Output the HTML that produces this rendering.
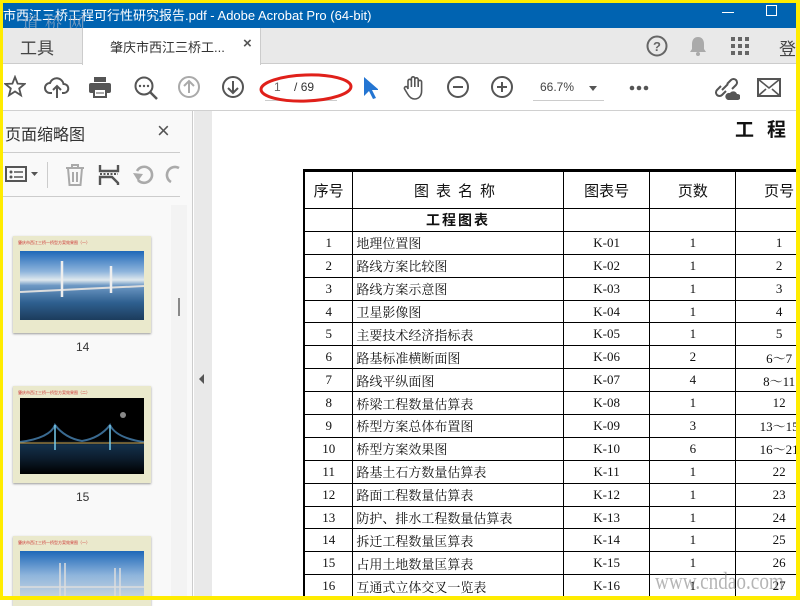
<!DOCTYPE html>
<html><head><meta charset="utf-8"><style>
*{margin:0;padding:0;box-sizing:border-box}
body{width:800px;height:600px;overflow:hidden;background:#fff;position:relative;font-family:"Liberation Sans","Noto Sans CJK SC",sans-serif}
.a{position:absolute}
.frame{position:absolute;inset:0;border:solid #ffec00;border-width:3px 4px 4px 3px;pointer-events:none;z-index:50}
table{border-collapse:collapse;font-family:"Liberation Serif","Noto Serif CJK SC",serif;font-size:13px;color:#111}
td{border:1px solid #000;height:22.9px;text-align:center;padding:0}
td.n{text-align:left;padding-left:3px}
tr.h td{height:38px;font-family:"Noto Sans CJK SC",sans-serif;font-size:15px}
.ic{position:absolute;top:75px}
</style></head><body>
<div class="frame"></div>
<!-- title bar -->
<div class="a" style="left:0;top:0;width:800px;height:28px;background:#0063b1"></div>
<div class="a" style="left:3px;top:5px;color:#fff;font-size:13px;white-space:nowrap">市西江三桥工程可行性研究报告.pdf - Adobe Acrobat Pro (64-bit)</div>
<div class="a" style="left:22px;top:9px;color:rgba(150,170,195,.8);font-size:17px;letter-spacing:6px;font-family:'Noto Serif CJK SC',serif">道桥网</div>
<div class="a" style="left:722px;top:12px;width:12px;height:1px;background:#fff"></div>
<div class="a" style="left:766px;top:5px;width:11px;height:11px;border:1px solid #fff"></div>
<!-- tab bar -->
<div class="a" style="left:0;top:28px;width:800px;height:36px;background:#e9e9e9;border-bottom:1px solid #ccc"></div>
<div class="a" style="left:20px;top:34px;font-size:17px;color:#444">工具</div>
<div class="a" style="left:82px;top:28px;width:179px;height:37px;background:#fff;border-left:1px solid #ccc;border-right:1px solid #ccc"></div>
<div class="a" style="left:110px;top:37px;font-size:13px;color:#333">肇庆市西江三桥工...</div>
<div class="a" style="left:243px;top:35px;font-size:15px;color:#555;font-weight:bold">×</div>
<svg class="a" style="left:646px;top:35px" width="22" height="22"><circle cx="11" cy="11" r="9.5" fill="none" stroke="#666" stroke-width="2"/><text x="11" y="16" font-size="13" font-weight="bold" text-anchor="middle" fill="#666" font-family="Liberation Sans">?</text></svg>
<svg class="a" style="left:688px;top:35px" width="20" height="22"><path d="M10 2c-4 0-6 3-6 7v5l-2 3h16l-2-3V9c0-4-2-7-6-7z" fill="#aaa"/><circle cx="10" cy="19" r="2" fill="#aaa"/></svg>
<svg class="a" style="left:731px;top:37px" width="18" height="18" fill="#666"><rect x="0" y="0" width="4" height="4"/><rect x="7" y="0" width="4" height="4"/><rect x="14" y="0" width="4" height="4"/><rect x="0" y="7" width="4" height="4"/><rect x="7" y="7" width="4" height="4"/><rect x="14" y="7" width="4" height="4"/><rect x="0" y="14" width="4" height="4"/><rect x="7" y="14" width="4" height="4"/><rect x="14" y="14" width="4" height="4"/></svg>
<div class="a" style="left:779px;top:35px;font-size:17px;color:#444">登</div>
<!-- toolbar -->
<div class="a" style="left:0;top:110px;width:800px;height:1px;background:#d0d0d0"></div>
<svg class="ic" style="left:4px" width="22" height="24"><path d="M11 2l2.6 6.6 7 .4-5.4 4.5 1.8 6.9L11 16.5 5 20.4l1.8-6.9L1.4 9l7-.4z" fill="none" stroke="#555" stroke-width="1.8"/></svg>
<svg class="ic" style="left:44px" width="26" height="24"><path d="M8 18H6a5 5 0 0 1 0-10 7 7 0 0 1 13.5 1A4.5 4.5 0 0 1 20 18h-2" fill="none" stroke="#555" stroke-width="2"/><path d="M13 23V11M9 15l4-4 4 4" fill="none" stroke="#555" stroke-width="2"/></svg>
<svg class="ic" style="left:88px" width="24" height="24"><rect x="6" y="2" width="12" height="5" fill="#555"/><rect x="1" y="8" width="22" height="10" rx="2" fill="#555"/><rect x="6" y="14" width="12" height="8" fill="#fff" stroke="#555" stroke-width="2"/><path d="M8 18h8" stroke="#555"/></svg>
<svg class="ic" style="left:133px" width="26" height="26"><circle cx="11" cy="11" r="8.5" fill="none" stroke="#555" stroke-width="2"/><path d="M17 17l7 7" stroke="#555" stroke-width="2.5"/><circle cx="7" cy="11" r="1.2" fill="#555"/><circle cx="11" cy="11" r="1.2" fill="#555"/><circle cx="15" cy="11" r="1.2" fill="#555"/></svg>
<svg class="ic" style="left:177px" width="24" height="24"><circle cx="12" cy="12" r="10" fill="none" stroke="#aaa" stroke-width="2"/><path d="M12 18V6M7 11l5-5 5 5" fill="none" stroke="#aaa" stroke-width="2"/></svg>
<svg class="ic" style="left:221px" width="24" height="24"><circle cx="12" cy="12" r="10" fill="none" stroke="#555" stroke-width="2"/><path d="M12 6v12M7 13l5 5 5-5" fill="none" stroke="#555" stroke-width="2"/></svg>
<div class="a" style="left:265px;top:100px;width:72px;height:1px;background:#ccc"></div>
<div class="a" style="left:274px;top:80px;font-size:12px;color:#333"><span style="color:#666">1</span>&nbsp;&nbsp;&nbsp;&nbsp;/ 69</div>
<svg class="a" style="left:258px;top:71px" width="96" height="34"><ellipse cx="48" cy="17" rx="45" ry="13" fill="none" stroke="#e0201a" stroke-width="3" transform="rotate(-2 48 17)"/></svg>
<svg class="ic" style="left:362px;top:76px" width="16" height="24"><path d="M2 1v19l5-5 4 8 3-1-4-8h7z" fill="#2475d2"/></svg>
<svg class="ic" style="left:402px" width="24" height="26"><path d="M6 14V6a1.7 1.7 0 0 1 3.4 0v6V3.5a1.7 1.7 0 0 1 3.4 0V12V4.5a1.7 1.7 0 0 1 3.4 0V12V7a1.7 1.7 0 0 1 3.4 0v9c0 5-3 8-7 8-3 0-5-1.5-7-5l-3-5a1.6 1.6 0 0 1 2.8-1.6z" fill="none" stroke="#555" stroke-width="1.6"/></svg>
<svg class="ic" style="left:446px" width="24" height="24"><circle cx="12" cy="12" r="10" fill="none" stroke="#555" stroke-width="2"/><path d="M7 12h10" stroke="#555" stroke-width="2"/></svg>
<svg class="ic" style="left:490px" width="24" height="24"><circle cx="12" cy="12" r="10" fill="none" stroke="#555" stroke-width="2"/><path d="M7 12h10M12 7v10" stroke="#555" stroke-width="2"/></svg>
<div class="a" style="left:540px;top:80px;font-size:12px;color:#444">66.7%</div>
<div class="a" style="left:589px;top:86px;border:4px solid transparent;border-top:5px solid #555"></div>
<div class="a" style="left:533px;top:100px;width:71px;height:1px;background:#ccc"></div>
<svg class="a" style="left:629px;top:85px" width="20" height="6" fill="#555"><circle cx="3" cy="3" r="2.3"/><circle cx="10" cy="3" r="2.3"/><circle cx="17" cy="3" r="2.3"/></svg>
<svg class="ic" style="left:712px;top:76px" width="28" height="26"><path d="M9 10l-4 4a3.5 3.5 0 0 0 5 5l4-4M15 8l4-4a3.5 3.5 0 0 1 5 5l-4 4M10 14l6-6" fill="none" stroke="#555" stroke-width="2"/><path d="M16 24h10a3 3 0 0 0-1-6 4 4 0 0 0-7-1 3.5 3.5 0 0 0-2 7z" fill="#555"/></svg>
<svg class="ic" style="left:757px;top:78px" width="24" height="20"><rect x="1" y="1" width="22" height="17" fill="none" stroke="#555" stroke-width="2"/><path d="M1 1l11 9 11-9M1 18l8-7M23 18l-8-7" fill="none" stroke="#555" stroke-width="1.6"/></svg>
<!-- left panel -->
<div class="a" style="left:0;top:111px;width:193px;height:489px;background:#f9f9f9;border-right:1px solid #ccc"></div>
<div class="a" style="left:5px;top:121px;font-size:16px;color:#333">页面缩略图</div>
<div class="a" style="left:157px;top:118px;font-size:22px;color:#555">×</div>
<div class="a" style="left:3px;top:152px;width:177px;height:1px;background:#ccc"></div>
<div class="a" style="left:3px;top:196px;width:177px;height:1px;background:#ccc"></div>
<svg class="a" style="left:4px;top:164px" width="36" height="20"><rect x="2" y="3" width="20" height="14" fill="none" stroke="#555" stroke-width="2"/><circle cx="7" cy="8" r="1.5" fill="#555"/><circle cx="7" cy="13" r="1.5" fill="#555"/><path d="M10 8h9M10 13h9" stroke="#555" stroke-width="1.6"/><path d="M27 8h7l-3.5 4z" fill="#555"/></svg>
<div class="a" style="left:47px;top:162px;width:1px;height:26px;background:#ccc"></div>
<svg class="a" style="left:64px;top:163px" width="22" height="24"><path d="M2 5h18M8 5V2h6v3M4 5l1.5 17h11L18 5M9 9v10M13 9v10" fill="none" stroke="#aaa" stroke-width="2"/></svg>
<svg class="a" style="left:98px;top:163px" width="22" height="24"><path d="M2 2v6h18V2M2 22v-8h12l6 6v2" fill="none" stroke="#555" stroke-width="2.4"/><path d="M2 11h18" stroke="#555" stroke-dasharray="2 1.5" stroke-width="2"/></svg>
<svg class="a" style="left:132px;top:164px" width="22" height="22"><path d="M6 16a8 8 0 1 0-1-9" fill="none" stroke="#aaa" stroke-width="2.6"/><path d="M1 9l5 8 5-7z" fill="#aaa"/></svg>
<svg class="a" style="left:165px;top:164px" width="15" height="22"><path d="M14 4a8 8 0 0 0-8 14" fill="none" stroke="#aaa" stroke-width="2.6"/></svg>
<div class="a" style="left:171px;top:205px;width:16px;height:395px;background:#f3f3f3"></div>
<div class="a" style="left:178px;top:298px;width:2px;height:18px;background:#888"></div>
<!-- thumbnails -->
<div class="a" style="left:13px;top:236px;width:138px;height:97px;background:#eae9cc;box-shadow:0 1px 2px #999"></div>
<div class="a" style="left:18px;top:240px;font-size:4px;color:#c33">肇庆市西江三桥一桥型方案效果图（一）</div>
<div class="a" style="left:20px;top:251px;width:124px;height:69px;background:linear-gradient(#1e68b8 0%,#8fb5dc 30%,#dfe8ee 42%,#6d98c4 50%,#2e5f8f 75%,#1c3c5c 100%)"></div>
<svg class="a" style="left:20px;top:251px" width="124" height="69"><path d="M0 41L124 35" stroke="#ddd" stroke-width="2"/><path d="M42 10v36M91 15v27" stroke="#eee" stroke-width="2.5"/></svg>
<div class="a" style="left:76px;top:340px;font-size:12px;color:#333">14</div>
<div class="a" style="left:13px;top:386px;width:138px;height:97px;background:#eae9cc;box-shadow:0 1px 2px #999"></div>
<div class="a" style="left:18px;top:390px;font-size:4px;color:#c33">肇庆市西江三桥一桥型方案效果图（二）</div>
<div class="a" style="left:20px;top:398px;width:124px;height:76px;background:linear-gradient(#000 0%,#000 55%,#13304a 62%,#0c1c2c 80%,#000 100%)"></div>
<svg class="a" style="left:20px;top:398px" width="124" height="76"><path d="M0 44Q30 40 35 27Q45 40 62 43Q80 40 90 27Q96 40 124 44" fill="none" stroke="#3a6a90" stroke-width="2"/><path d="M0 45h124" stroke="#d0a040"/><path d="M35 27v25M90 27v25" stroke="#7ce" stroke-width="1.5"/><circle cx="103" cy="17" r="3" fill="#888"/></svg>
<div class="a" style="left:76px;top:490px;font-size:12px;color:#333">15</div>
<div class="a" style="left:13px;top:536px;width:138px;height:70px;background:#eae9cc;box-shadow:0 1px 2px #999"></div>
<div class="a" style="left:18px;top:540px;font-size:4px;color:#c33">肇庆市西江三桥一桥型方案效果图（一）</div>
<div class="a" style="left:20px;top:551px;width:124px;height:49px;background:linear-gradient(#1e68b8,#8fb5dc 50%,#cfd8e0)"></div>
<svg class="a" style="left:20px;top:551px" width="124" height="49"><path d="M40 12v37M45 12v37M95 17v32M100 17v32M0 36h124" stroke="#ddd" stroke-width="1.5"/></svg>
<!-- divider -->
<div class="a" style="left:194px;top:111px;width:18px;height:489px;background:#e9e9e9"></div>
<div class="a" style="left:199px;top:374px;border:5px solid transparent;border-right:5px solid #555;border-left:0"></div>
<!-- page -->
<div class="a" style="left:735px;top:115px;font-size:19px;font-weight:bold;color:#111;letter-spacing:13px;font-family:'Noto Sans CJK SC',sans-serif;white-space:nowrap">工程</div>
<div class="a" style="left:303px;top:169px;width:493px;height:431px;overflow:hidden">
<table style="width:520px;border-top:3px solid #000;border-left:2px solid #000">
<colgroup><col style="width:49px"><col style="width:211px"><col style="width:87px"><col style="width:86px"><col style="width:87px"></colgroup>
<tr class="h"><td>序号</td><td style="letter-spacing:7px">图表名称</td><td>图表号</td><td>页数</td><td>页号</td></tr>
<tr><td></td><td style="font-weight:bold;font-size:14px;font-family:'Noto Sans CJK SC',sans-serif;letter-spacing:2px">工程图表</td><td></td><td></td><td></td></tr>
<tr><td>1</td><td class="n">地理位置图</td><td>K-01</td><td>1</td><td>1</td></tr>
<tr><td>2</td><td class="n">路线方案比较图</td><td>K-02</td><td>1</td><td>2</td></tr>
<tr><td>3</td><td class="n">路线方案示意图</td><td>K-03</td><td>1</td><td>3</td></tr>
<tr><td>4</td><td class="n">卫星影像图</td><td>K-04</td><td>1</td><td>4</td></tr>
<tr><td>5</td><td class="n">主要技术经济指标表</td><td>K-05</td><td>1</td><td>5</td></tr>
<tr><td>6</td><td class="n">路基标准横断面图</td><td>K-06</td><td>2</td><td>6～7</td></tr>
<tr><td>7</td><td class="n">路线平纵面图</td><td>K-07</td><td>4</td><td>8～11</td></tr>
<tr><td>8</td><td class="n">桥梁工程数量估算表</td><td>K-08</td><td>1</td><td>12</td></tr>
<tr><td>9</td><td class="n">桥型方案总体布置图</td><td>K-09</td><td>3</td><td>13～15</td></tr>
<tr><td>10</td><td class="n">桥型方案效果图</td><td>K-10</td><td>6</td><td>16～21</td></tr>
<tr><td>11</td><td class="n">路基土石方数量估算表</td><td>K-11</td><td>1</td><td>22</td></tr>
<tr><td>12</td><td class="n">路面工程数量估算表</td><td>K-12</td><td>1</td><td>23</td></tr>
<tr><td>13</td><td class="n">防护、排水工程数量估算表</td><td>K-13</td><td>1</td><td>24</td></tr>
<tr><td>14</td><td class="n">拆迁工程数量匡算表</td><td>K-14</td><td>1</td><td>25</td></tr>
<tr><td>15</td><td class="n">占用土地数量匡算表</td><td>K-15</td><td>1</td><td>26</td></tr>
<tr><td>16</td><td class="n">互通式立体交叉一览表</td><td>K-16</td><td>1</td><td>27</td></tr>
</table></div>
<div class="a" style="left:655px;top:569px;font-size:24px;color:rgba(120,120,120,.55);font-family:'Liberation Serif',serif;white-space:nowrap;transform:scaleX(.8);transform-origin:left">www.cndao.com</div>
</body></html>
